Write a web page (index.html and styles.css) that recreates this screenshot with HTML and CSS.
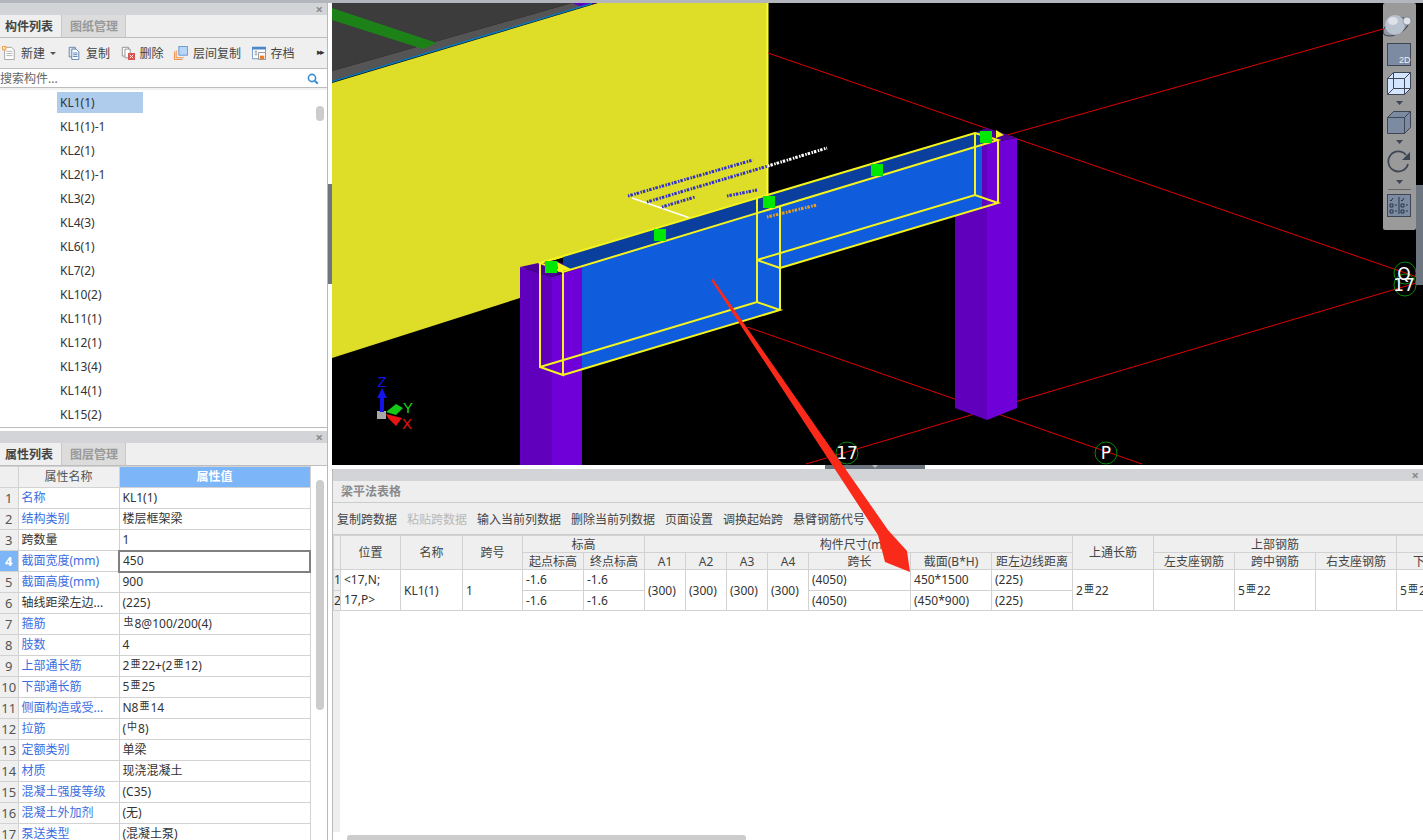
FILE: index.html
```html
<!DOCTYPE html>
<html lang="zh-CN">
<head>
<meta charset="utf-8">
<title>梁平法表格</title>
<link rel="stylesheet" href="styles.css">
</head>
<body>
<div class="app">
  <div class="topbar"></div>
  <div class="main">
    <aside class="side">
      <section class="panel tree">
        <div class="panel-head"><span class="close">×</span></div>
        <div class="tabs"><span class="tab active">构件列表</span><span class="tab">图纸管理</span></div>
        <div class="tools">
          <span class="tool tool-new">
            <svg class="ico" viewBox="0 0 16 16"><path d="M3 1.500h8l3 3v11H3z" fill="#fff" stroke="#9a9a9a"/><path d="M5 6h7M5 8.500h7M5 11h7" stroke="#aaa"/><path d="M0 0h5v5H0z" fill="#f5a13c"/><path d="M1 1l3 3M4 1L1 4" stroke="#fff"/></svg>
            新建<i class="caret"></i>
          </span>
          <span class="tool"><svg class="ico" viewBox="0 0 16 16"><path d="M2.500 1.500h7v11h-7z" fill="#dfe9f6" stroke="#5d7fa8"/><path d="M5.500 3.500h5l3 3v9h-8z" fill="#fff" stroke="#4a77ad"/><path d="M7 8h5M7 10h5M7 12h5" stroke="#4a77ad"/></svg>复制</span>
          <span class="tool"><svg class="ico" viewBox="0 0 16 16"><path d="M1.500 1.500h7v10h-7z" fill="#fff" stroke="#8b8b8b"/><path d="M4.500 3.500h6v10h-6z" fill="#fff" stroke="#8b8b8b"/><path d="M8 8h8v8H8z" fill="#d9534f"/><path d="M10 10l4 4M14 10l-4 4" stroke="#fff"/></svg>删除</span>
          <span class="tool"><svg class="ico" viewBox="0 0 16 16"><path d="M.500 6.500v9h9M2.500 5v8.500H11" fill="none" stroke="#ee7d2a"/><path d="M5.500.500h10v10h-10z" fill="#b8d6f8" stroke="#5b8fd0"/></svg>层间复制</span>
          <span class="tool"><svg class="ico" viewBox="0 0 16 16"><path d="M.500 1.500h15v13H.500z" fill="#fff" stroke="#5b8fd0"/><path d="M0 1h16v3H0z" fill="#4e87c9"/><path d="M3 6h3M3 8h3M3 10h3" stroke="#888"/><path d="M7.500 7.500h8v8h-8z" fill="#fff" stroke="#888"/><path d="M9 11h5v4H9z" fill="#ee7d2a"/></svg>存档</span>
          <span class="more">▸▸</span>
        </div>
        <div class="search"><span>搜索构件...</span><svg class="search-ico" viewBox="0 0 12 12"><circle cx="5" cy="5" r="3.600" fill="none" stroke="#3a90d0" stroke-width="1.600"/><path d="M7.800 7.800l3 3" stroke="#3a90d0" stroke-width="2"/></svg></div>
        <div class="list">
          <div class="item"><span class="item-name selected">KL1(1)</span></div>
          <div class="item"><span class="item-name">KL1(1)-1</span></div>
          <div class="item"><span class="item-name">KL2(1)</span></div>
          <div class="item"><span class="item-name">KL2(1)-1</span></div>
          <div class="item"><span class="item-name">KL3(2)</span></div>
          <div class="item"><span class="item-name">KL4(3)</span></div>
          <div class="item"><span class="item-name">KL6(1)</span></div>
          <div class="item"><span class="item-name">KL7(2)</span></div>
          <div class="item"><span class="item-name">KL10(2)</span></div>
          <div class="item"><span class="item-name">KL11(1)</span></div>
          <div class="item"><span class="item-name">KL12(1)</span></div>
          <div class="item"><span class="item-name">KL13(4)</span></div>
          <div class="item"><span class="item-name">KL14(1)</span></div>
          <div class="item"><span class="item-name">KL15(2)</span></div>
          <div class="list-thumb"></div>
        </div>
      </section>
      <section class="panel props">
        <div class="panel-head"><span class="close">×</span></div>
        <div class="tabs"><span class="tab active">属性列表</span><span class="tab">图层管理</span></div>
        <div class="props-body">
          <table class="prop-table">
            <colgroup><col class="c-num"><col class="c-name"><col></colgroup>
            <thead><tr><th class="num"></th><th>属性名称</th><th class="val-head">属性值</th></tr></thead>
            <tbody>
              <tr><td class="num">1</td><td class="link">名称</td><td>KL1(1)</td></tr>
              <tr><td class="num">2</td><td class="link">结构类别</td><td>楼层框架梁</td></tr>
              <tr><td class="num">3</td><td>跨数量</td><td>1</td></tr>
              <tr><td class="num cur">4</td><td class="link">截面宽度(mm)</td><td class="editing">450</td></tr>
              <tr><td class="num">5</td><td class="link">截面高度(mm)</td><td>900</td></tr>
              <tr><td class="num">6</td><td>轴线距梁左边...</td><td>(225)</td></tr>
              <tr><td class="num">7</td><td class="link">箍筋</td><td><span class="rb">虫</span>8@100/200(4)</td></tr>
              <tr><td class="num">8</td><td class="link">肢数</td><td>4</td></tr>
              <tr><td class="num">9</td><td class="link">上部通长筋</td><td>2<span class="rb">亜</span>22+(2<span class="rb">亜</span>12)</td></tr>
              <tr><td class="num">10</td><td class="link">下部通长筋</td><td>5<span class="rb">亜</span>25</td></tr>
              <tr><td class="num">11</td><td class="link">侧面构造或受...</td><td>N8<span class="rb">亜</span>14</td></tr>
              <tr><td class="num">12</td><td class="link">拉筋</td><td>(<span class="rb">中</span>8)</td></tr>
              <tr><td class="num">13</td><td class="link">定额类别</td><td>单梁</td></tr>
              <tr><td class="num">14</td><td class="link">材质</td><td>现浇混凝土</td></tr>
              <tr><td class="num">15</td><td class="link">混凝土强度等级</td><td>(C35)</td></tr>
              <tr><td class="num">16</td><td class="link">混凝土外加剂</td><td>(无)</td></tr>
              <tr><td class="num">17</td><td class="link">泵送类型</td><td>(混凝土泵)</td></tr>
            </tbody>
          </table>
          <div class="prop-scroll"><div class="prop-thumb"></div></div>
        </div>
      </section>
    </aside>
    <div class="workspace">
      <div class="view-row">
        <div class="v-split"><div class="v-grip"></div></div>
        <div class="canvas">
          <svg class="scene" viewBox="332 3 1091 462" width="1091" height="462">
            <rect x="332" y="3" width="1091" height="462" fill="#000"/>
            <polygon points="332,3 572,3 332,71" fill="#3c3c3c"/>
            <polygon points="332,71 572,3 594,3 332,81" fill="#555"/>
            <polygon points="332,8 437,43 423,49 332,20" fill="#1c8218"/>
            <polygon points="572,3 596,3 582,7" fill="#6000c0"/>
            <polygon points="332,83 598,3 768,3 768,197 582,252 520,270 520,298 332,358" fill="#dede28"/>
            <path d="M332 81.500 592 3.500" stroke="#0a78b8" stroke-width="1.500"/>
            <path d="M767.500 3v194" stroke="#ffff30" stroke-width="2"/>
            <g stroke="#e00000" fill="none">
              <path d="M768 53 1423 279"/>
              <path d="M1000 137 1383 29"/>
              <path d="M806 464 1423 281"/>
              <path d="M747 327 1142 464"/>
            </g>
            <polygon points="520,267 552,277 552,465 520,465" fill="#6000bc"/>
            <polygon points="552,277 582,267 582,465 552,465" fill="#7000d8"/>
            <polygon points="520,267 552,260 575,267 552,277" fill="#4c0098"/>
            <polygon points="955,140 987,143 987,420 955,408" fill="#6000bc"/>
            <polygon points="987,143 1017,138 1017,408 987,420" fill="#7000d8"/>
            <polygon points="960,138 987,128 1017,138 987,143" fill="#4c0098"/>
            <polygon points="582,266 982,145 982,208 780,268 780,310 582,369" fill="#0f5cdc"/>
            <polygon points="563,256 982,131 982,145 563,272" fill="#0a3f9e"/>
            <path d="M632 198 690 218" stroke="#fff" stroke-width="1.500"/>
            <g fill="none" stroke-width="3" stroke-dasharray="1.500 1 2.500 1.500">
              <path d="M628 196 753 160" stroke="#3030d0"/>
              <path d="M647 202 768 166" stroke="#3030d0"/>
              <path d="M768 166 827 148" stroke="#fff"/>
              <path d="M662 207 695 197" stroke="#3030d0"/>
              <path d="M727 196 757 190" stroke="#3030d0"/>
              <path d="M767 217 817 205" stroke="#e8a020"/>
            </g>
            <g fill="none" stroke="#f4f41e" stroke-width="2">
              <path d="M540 263 975 133 998 140 563 272Z"/>
              <path d="M540 263V367L563 375V272"/>
              <path d="M540 367 757 302 780 310 563 375"/>
              <path d="M757 197V302M780 207V310"/>
              <path d="M757 260 780 268M757 260 975 195 998 203 780 268"/>
              <path d="M975 133V195M998 140V203"/>
            </g>
            <polygon points="557,262 571,269 558,272" fill="#f4f41e"/>
            <polygon points="996,130 1004,135 996,138" fill="#f4f41e"/>
            <g fill="#00e800">
              <rect x="545" y="261" width="12" height="12"/>
              <rect x="654" y="229" width="12" height="12"/>
              <rect x="763" y="196" width="12" height="12"/>
              <rect x="871" y="164" width="12" height="12"/>
              <rect x="980" y="131" width="12" height="12"/>
            </g>
            <g class="axis-ring">
              <circle cx="1405" cy="273" r="11"/>
              <circle cx="1405" cy="285" r="11"/>
              <circle cx="847" cy="453" r="11"/>
              <circle cx="1106" cy="453" r="11"/>
            </g>
            <g class="axis-text">
              <text x="1404" y="280">Q</text>
              <text x="1404" y="291">17</text>
              <text x="847" y="459">17</text>
              <text x="1106" y="459">P</text>
            </g>
            <rect x="377" y="411" width="9" height="8" fill="#a8a8a8"/>
            <path d="M382 388 377 398H380V412H384V398H387Z" fill="#1414e8"/>
            <path d="M386 412 396 404 403 408 396 415Z" fill="#14c814"/>
            <path d="M386 414 402 418 396 426 388 418Z" fill="#e81414"/>
            <text class="gizmo z" x="382" y="387">Z</text>
            <text class="gizmo y" x="408" y="413">Y</text>
            <text class="gizmo x" x="407" y="429">X</text>
          </svg>
          <svg class="float-bar" viewBox="1383 3 33 227" width="33" height="227">
            <rect x="1383" y="3" width="33" height="227" rx="2" fill="#9a9a9a"/>
            <ellipse cx="1396" cy="27" rx="14" ry="7" fill="#8f96a4" stroke="#3a4250" transform="rotate(-28 1396 27)"/>
            <circle cx="1395" cy="25" r="10" fill="#b9c2cf"/>
            <ellipse cx="1393" cy="21" rx="5" ry="4" fill="#dde1e8"/>
            <circle cx="1407" cy="21" r="4" fill="#dfe3e9" stroke="#6a7280" stroke-width=".6"/>
            <rect x="1387.500" y="43.500" width="23" height="22" fill="#7c8aa2" stroke="#3e4656"/>
            <text class="two-d" x="1399" y="63">2D</text>
            <path d="M1387.500 78.500 1393.500 72.500H1410.500V88.500L1404.500 94.500H1387.500Z" fill="#d4e6ff" stroke="#3e4656"/>
            <path d="M1387.500 78.500H1404.500V94.500M1404.500 78.500 1410.500 72.500M1393.500 72.500V88.500H1410.500M1393.500 88.500 1387.500 94.500" fill="none" stroke="#3e4656"/>
            <path d="M1396 101h7l-3.500 4z" fill="#3e4656"/>
            <path d="M1387.500 117.500 1393.500 111.500H1410.500V127.500L1404.500 133.500H1387.500Z" fill="#7c8aa2" stroke="#3e4656"/>
            <path d="M1387.500 117.500H1404.500V133.500M1404.500 117.500 1410.500 111.500" fill="none" stroke="#3e4656"/>
            <path d="M1396 140h7l-3.500 4z" fill="#3e4656"/>
            <path d="M1406 155A10 10 0 1 0 1408 164" fill="none" stroke="#3e4656" stroke-width="1.800"/>
            <path d="M1410 152V160H1402Z" fill="#3e4656"/>
            <path d="M1396 180h7l-3.500 4z" fill="#3e4656"/>
            <path d="M1388 189.500h23" stroke="#666"/>
            <rect x="1387.500" y="194.500" width="23" height="22" fill="#7c8aa2" stroke="#3e4656"/>
            <path d="M1399 197v17M1390 200l1 1 2-3M1401 200l1 1 2-3M1390 204h3v3h-3zM1390 210h3v3h-3zM1401 204h3v3h-3zM1401 210h3v3h-3zM1395 205h2M1395 211h2M1406 205h2M1406 211h2" fill="none" stroke="#222a38" stroke-width=".9"/>
          </svg>
          <div class="right-grip"></div>
        </div>
      </div>
      <div class="h-split"><div class="h-grip"><i class="h-arrow"></i></div></div>
      <section class="grid-panel">
        <div class="panel-head"><span class="close">×</span></div>
        <div class="grid-title">梁平法表格</div>
        <div class="grid-tools">
          <span>复制跨数据</span><span class="off">粘贴跨数据</span><span>输入当前列数据</span><span>删除当前列数据</span><span>页面设置</span><span>调换起始跨</span><span>悬臂钢筋代号</span>
        </div>
        <div class="grid-wrap">
          <table class="grid">
            <colgroup>
              <col class="g7"><col class="g60"><col class="g62"><col class="g60"><col class="g61"><col class="g61">
              <col class="g41"><col class="g41"><col class="g41"><col class="g41">
              <col class="g102"><col class="g81"><col class="g81"><col class="g81"><col class="g81"><col class="g81"><col class="g81"><col class="g81">
            </colgroup>
            <thead>
              <tr>
                <th rowspan="2"></th><th rowspan="2">位置</th><th rowspan="2">名称</th><th rowspan="2">跨号</th>
                <th colspan="2">标高</th><th colspan="7">构件尺寸(mm)</th><th rowspan="2">上通长筋</th><th colspan="3">上部钢筋</th><th></th>
              </tr>
              <tr>
                <th>起点标高</th><th>终点标高</th><th>A1</th><th>A2</th><th>A3</th><th>A4</th><th>跨长</th><th>截面(B*H)</th><th>距左边线距离</th>
                <th>左支座钢筋</th><th>跨中钢筋</th><th>右支座钢筋</th><th>下部钢筋</th>
              </tr>
            </thead>
            <tbody>
              <tr>
                <td class="idx">1</td><td rowspan="2" class="pos">&lt;17,N;<br>17,P&gt;</td><td rowspan="2">KL1(1)</td><td rowspan="2">1</td>
                <td>-1.6</td><td>-1.6</td><td rowspan="2">(300)</td><td rowspan="2">(300)</td><td rowspan="2">(300)</td><td rowspan="2">(300)</td>
                <td>(4050)</td><td>450*1500</td><td>(225)</td><td rowspan="2">2<span class="rb">亜</span>22</td><td rowspan="2"></td><td rowspan="2">5<span class="rb">亜</span>22</td><td rowspan="2"></td><td rowspan="2">5<span class="rb">亜</span>25</td>
              </tr>
              <tr>
                <td class="idx">2</td><td>-1.6</td><td>-1.6</td><td>(4050)</td><td>(450*900)</td><td>(225)</td>
              </tr>
            </tbody>
          </table>
          <div class="h-scroll"><div class="h-thumb"></div></div>
        </div>
      </section>
    </div>
  </div>
  <svg class="annot" viewBox="0 0 1423 840" width="1423" height="840">
    <polygon points="711,280 713,279 888,530 907,551 910,572 885,562 878,535" fill="#fa2a1a"/>
  </svg>
</div>
</body>
</html>
```
FILE: styles.css
```css
* { box-sizing: border-box; }
html, body { margin: 0; height: 100%; background: #fff; overflow: hidden; }
body, table { font-family: "Noto Sans", "Noto Sans CJK SC", sans-serif; font-size: 12px; color: #222; }
.app { position: relative; width: 1423px; height: 840px; overflow: hidden; display: flex; flex-direction: column; }
.topbar { height: 3px; background: #b4b6be; flex: none; }
.main { flex: 1; display: flex; min-height: 0; }

.side { width: 328px; flex: none; display: flex; flex-direction: column; gap: 3px; border-right: 1px solid #b8b8b8; }
.panel { display: flex; flex-direction: column; min-height: 0; }
.tree { height: 425px; flex: none; border-bottom: 1px solid #bbb; }
.props { flex: 1; }
.panel-head { height: 12px; flex: none; background: #d3d4d8; position: relative; display: flex; justify-content: flex-end; align-items: center; padding-right: 4px; }
.close { color: #8a8a8a; font-size: 13px; font-weight: 700; line-height: 12px; }
.tabs { height: 23px; flex: none; background: #efefef; border-bottom: 1px solid #bdbdbd; display: flex; }
.tab { width: 64px; padding-left: 8px; line-height: 23px; color: #999; background: #dcdcdc; font-weight: 700; border-right: 1px solid #c8c8c8; white-space: nowrap; }
.tab.active { width: 62px; padding-left: 5px; background: #efefef; color: #444; border-right: 1px solid #c8c8c8; }
.tools { height: 31px; flex: none; background: #efefef; border-bottom: 1px solid #bdbdbd; display: flex; align-items: center; padding-left: 2px; color: #444; position: relative; white-space: nowrap; }
.tool { display: flex; align-items: center; gap: 5px; margin-right: 10.500px; flex: none; }
.tool-new { margin-right: 11px; }
.ico { width: 14px; height: 14px; flex: none; }
.caret { width: 0; height: 0; border: 3px solid transparent; border-top: 3px solid #555; border-bottom: 0; margin-left: 0; }
.more { position: absolute; right: 4px; top: 7px; font-size: 9px; letter-spacing: -2px; color: #333; }
.search { height: 19px; flex: none; border-bottom: 1px solid #bdbdbd; color: #666; display: flex; justify-content: space-between; align-items: center; line-height: 18px; padding: 1px 8px 0 0; }
.search-ico { width: 12px; height: 12px; }
.list { flex: 1; position: relative; overflow: hidden; border-top: 2px solid #f2f2f2; padding-top: 2px; }
.item { height: 24px; padding-left: 57px; }
.item-name { display: block; width: 86px; height: 21px; padding-left: 3px; line-height: 21px; color: #333; }
.item-name.selected { background: #b0ccec; }
.list-thumb { position: absolute; left: 316px; top: 16px; width: 8px; height: 15px; border-radius: 4px; background: #ccc; }

.props-body { flex: 1; display: flex; min-height: 0; overflow: hidden; }
.prop-table { width: 311px; flex: none; table-layout: fixed; border-collapse: collapse; align-self: flex-start; }
.c-num { width: 18px; }
.c-name { width: 101px; }
.prop-table th, .prop-table td { height: 21px; padding: 0 0 0 3px; border: 1px solid #d2d2d2; font-weight: 400; line-height: 18px; white-space: nowrap; overflow: hidden; text-align: left; color: #333; }
.prop-table th { text-align: center; background: #f0f0f0; color: #555; padding: 0; }
.prop-table .num { background: #efefef; color: #555; text-align: center; padding: 0; border-left: 0; font-size: 13px; }
.prop-table .num.cur { background: #7cb6f8; color: #fff; font-weight: 700; }
.prop-table .val-head { background: #7cb6f8; color: #fff; font-weight: 700; }
.prop-table .link { color: #3a6ee0; }
.prop-table .editing { border: 2px solid #808080; }
.rb { font-size: 10px; vertical-align: 3px; margin: 0 1px; line-height: 0; }
.prop-scroll { flex: 1; padding: 14px 0 0 5px; }
.prop-thumb { width: 8px; height: 230px; border-radius: 4px; background: #ccc; }

.workspace { flex: 1; min-width: 0; display: flex; flex-direction: column; }
.view-row { height: 462px; flex: none; display: flex; }
.v-split { width: 4px; flex: none; display: flex; align-items: center; }
.v-grip { width: 4px; height: 100px; background: #6c7580; }
.canvas { flex: 1; position: relative; background: #000; overflow: hidden; }
.scene { display: block; }
.axis-ring circle { fill: none; stroke: #0a8a0a; stroke-width: 1; }
.axis-text text { fill: #fff; font-size: 17px; text-anchor: middle; font-family: "DejaVu Sans", sans-serif; font-weight: 400; }
.gizmo { font-size: 15px; font-family: "Liberation Sans", sans-serif; text-anchor: middle; }
.gizmo.z { fill: #1414e8; }
.gizmo.y { fill: #14d814; }
.gizmo.x { fill: #e81414; }
.two-d { fill: #eef1f6; font-size: 9px; font-family: "Liberation Sans", sans-serif; }
.float-bar { position: absolute; left: 1051px; top: 0; }
.right-grip { position: absolute; right: 0; top: 182px; width: 7px; height: 100px; background: #6c7580; }

.h-split { height: 4px; flex: none; padding: 0 6px 0 4px; display: flex; justify-content: center; }
.h-grip { width: 100px; height: 4px; background: #6c7580; display: flex; justify-content: center; }
.h-arrow { width: 0; height: 0; border: 3px solid transparent; border-top: 3px solid #bbb; border-bottom: 0; }

.grid-panel { flex: 1; min-height: 0; margin-left: 4px; border-left: 1px solid #bbb; display: flex; flex-direction: column; overflow: hidden; }
.grid-title { height: 22px; flex: none; background: #eee; border-bottom: 1px solid #ccc; padding-left: 8px; line-height: 21px; color: #8a8a8a; font-weight: 700; }
.grid-tools { height: 32px; flex: none; background: #eee; border-bottom: 1px solid #ccc; display: flex; gap: 10px; align-items: center; padding-left: 4px; color: #444; }
.grid-tools .off { color: #b8b8b8; }
.grid-wrap { flex: 1; min-height: 0; display: flex; flex-direction: column; background: linear-gradient(#eee, #eee) left top / 7px 297px no-repeat; }
.grid { table-layout: fixed; border-collapse: collapse; width: 1144px; flex: none; }
.g7 { width: 7px; } .g41 { width: 41px; } .g60 { width: 60px; } .g61 { width: 61px; } .g62 { width: 62px; } .g81 { width: 81px; } .g102 { width: 102px; }
.grid th, .grid td { border: 1px solid #d2d2d2; padding: 0; overflow: hidden; white-space: nowrap; line-height: 15px; }
.grid th { height: 17px; background: #efefef; font-weight: 400; color: #444; text-align: center; }
.grid td { height: 20.500px; padding-left: 3px; color: #333; background: #fff; }
.grid td.idx { padding: 0; background: #efefef; }
.grid td.pos { line-height: 20px; }
.h-scroll { margin-top: auto; height: 5px; padding-left: 14px; flex: none; }
.h-thumb { width: 399px; height: 5px; background: #ccc; border-radius: 3px 3px 0 0; }

.annot { position: absolute; left: 0; top: 0; pointer-events: none; }
```
